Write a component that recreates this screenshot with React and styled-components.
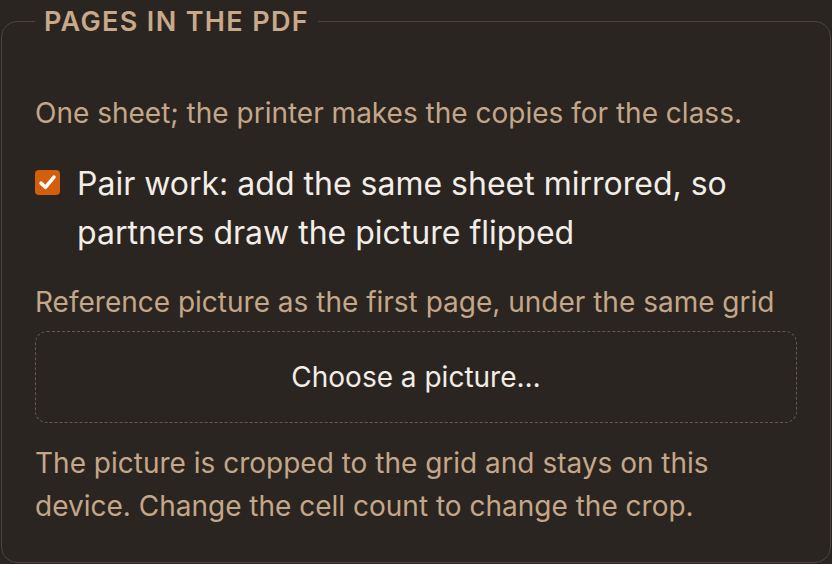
import React, { useState } from "react";
import styled, { createGlobalStyle } from "styled-components";

const GlobalStyle = createGlobalStyle`
  html, body {
    margin: 0;
    padding: 0;
    background: #2a2520;
  }
  body {
    font-family: Inter, "Noto Sans", "Liberation Sans", sans-serif;
    -webkit-font-smoothing: antialiased;
  }
`;

const Page = styled.div`
  padding: 8px 1px 0;
`;

const Group = styled.fieldset`
  margin: 0;
  padding: 10px 33px 34px;
  border: 1.5px solid #4a443d;
  border-radius: 16px;
  min-width: 0;
`;

const Legend = styled.legend`
  padding: 0 9px;
  color: #c9a98a;
  font-size: 27px;
  font-weight: 600;
  letter-spacing: 0.05em;
  text-transform: uppercase;
  line-height: 1;
`;

const Hint = styled.p`
  margin: ${(p) => p.$margin || "0"};
  color: #c4a78a;
  font-size: 28px;
  line-height: ${(p) => p.$lh || "42px"};
`;

const CheckRow = styled.label`
  display: flex;
  align-items: flex-start;
  gap: 17px;
  margin: 25px 0 0;
  cursor: pointer;
  color: #f2ede7;
  font-size: 32px;
  line-height: 49px;
`;

const HiddenInput = styled.input`
  position: absolute;
  opacity: 0;
  width: 0;
  height: 0;
`;

const Box = styled.span`
  flex: none;
  box-sizing: border-box;
  width: 25px;
  height: 25px;
  margin-top: 11px;
  border-radius: 4px;
  background: ${(p) => (p.$on ? "#d35f0c" : "transparent")};
  border: ${(p) => (p.$on ? "none" : "1.5px solid #8a8078")};
  display: flex;
  align-items: center;
  justify-content: center;
`;

const Drop = styled.button`
  display: block;
  box-sizing: border-box;
  width: 100%;
  height: 92px;
  margin-top: 8px;
  padding: 0;
  border: 1.5px dashed #625a52;
  border-radius: 12px;
  background: transparent;
  color: #f2ede7;
  font-family: inherit;
  font-size: 28px;
  cursor: pointer;
`;

export default function App() {
  const [pair, setPair] = useState(true);
  return (
    <Page>
      <GlobalStyle />
      <Group>
        <Legend>Pages in the PDF</Legend>
        <Hint $margin="47px 0 0">
          One sheet; the printer makes the copies for the class.
        </Hint>
        <CheckRow>
          <HiddenInput
            type="checkbox"
            checked={pair}
            onChange={(e) => setPair(e.target.checked)}
          />
          <Box $on={pair}>
            {pair && (
              <svg width="25" height="25" viewBox="0 0 24 24" fill="none">
                <path
                  d="M5.8 12.6 L10 16.6 L18.2 6.8"
                  stroke="#fff"
                  strokeWidth="3.4"
                  strokeLinecap="round"
                  strokeLinejoin="round"
                />
              </svg>
            )}
          </Box>
          <span>
            Pair work: add the same sheet mirrored, so partners draw the
            picture flipped
          </span>
        </CheckRow>
        <Hint $margin="24px 0 0">
          Reference picture as the first page, under the same grid
        </Hint>
        <Drop type="button">Choose a picture…</Drop>
        <Hint $margin="19px 0 0" $lh="43px">
          The picture is cropped to the grid and stays on this device. Change
          the cell count to change the crop.
        </Hint>
      </Group>
    </Page>
  );
}
